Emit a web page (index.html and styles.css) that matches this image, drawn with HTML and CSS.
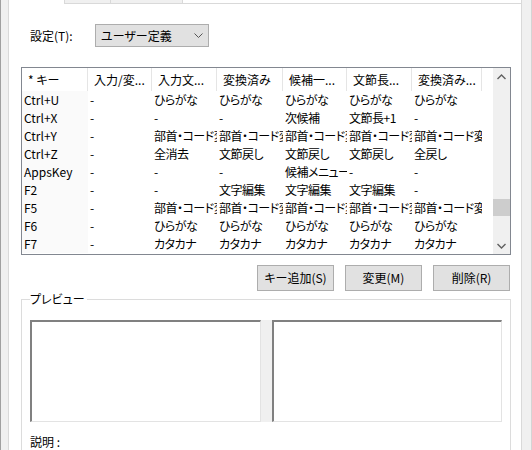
FILE: index.html
```html
<!DOCTYPE html>
<html lang="ja">
<head>
  <meta charset="UTF-8" />
  <title>キー設定</title>
  <link rel="stylesheet" href="styles.css">
</head>
<body>
  <div class="window">
    <div class="tabs">
      <div class="tab tab-active"></div>
      <div class="tab tab-a"></div>
      <div class="tab tab-b"></div>
      <div class="tab tab-fill"></div>
    </div>

    <div class="panel">
      <div class="setting-row">
        <label class="setting-label">設定(T):</label>
        <div class="combo">
          <span>ユーザー定義</span>
          <svg class="combo-arrow" width="9" height="6" viewBox="0 0 9 6"><polyline points="0.5,0.5 4.5,4.5 8.5,0.5" fill="none" stroke="#555" stroke-width="1"/></svg>
        </div>
      </div>

      <div class="listview">
        <div class="list-body">
          <div class="list-head">
            <div class="hcell">* キー</div>
            <div class="hcell">入力/変...</div>
            <div class="hcell">入力文...</div>
            <div class="hcell">変換済み</div>
            <div class="hcell">候補一...</div>
            <div class="hcell">文節長...</div>
            <div class="hcell">変換済み...</div>
          </div>
          <div class="row"><div>Ctrl+U</div><div>-</div><div>ひらがな</div><div>ひらがな</div><div>ひらがな</div><div>ひらがな</div><div>ひらがな</div></div>
          <div class="row"><div>Ctrl+X</div><div>-</div><div>-</div><div>-</div><div>次候補</div><div>文節長+1</div><div>-</div></div>
          <div class="row"><div>Ctrl+Y</div><div>-</div><div>部首・コード変</div><div>部首・コード変</div><div>部首・コード変</div><div>部首・コード変</div><div>部首・コード変</div></div>
          <div class="row"><div>Ctrl+Z</div><div>-</div><div>全消去</div><div>文節戻し</div><div>文節戻し</div><div>文節戻し</div><div>全戻し</div></div>
          <div class="row"><div>AppsKey</div><div>-</div><div>-</div><div>-</div><div>候補メニュー</div><div>-</div><div>-</div></div>
          <div class="row"><div>F2</div><div>-</div><div>-</div><div>文字編集</div><div>文字編集</div><div>文字編集</div><div>-</div></div>
          <div class="row"><div>F5</div><div>-</div><div>部首・コード変</div><div>部首・コード変</div><div>部首・コード変</div><div>部首・コード変</div><div>部首・コード変</div></div>
          <div class="row"><div>F6</div><div>-</div><div>ひらがな</div><div>ひらがな</div><div>ひらがな</div><div>ひらがな</div><div>ひらがな</div></div>
          <div class="row"><div>F7</div><div>-</div><div>カタカナ</div><div>カタカナ</div><div>カタカナ</div><div>カタカナ</div><div>カタカナ</div></div>
        </div>
        <div class="scrollbar">
          <div class="sb-btn">
            <svg width="9" height="6" viewBox="0 0 9 6"><polyline points="0.5,5 4.5,1 8.5,5" fill="none" stroke="#606060" stroke-width="1.4"/></svg>
          </div>
          <div class="sb-track"><div class="sb-thumb"></div></div>
          <div class="sb-btn">
            <svg width="9" height="6" viewBox="0 0 9 6"><polyline points="0.5,1 4.5,5 8.5,1" fill="none" stroke="#606060" stroke-width="1.4"/></svg>
          </div>
        </div>
      </div>

      <div class="buttons">
        <button class="btn">キー追加(S)</button>
        <button class="btn">変更(M)</button>
        <button class="btn">削除(R)</button>
      </div>

      <fieldset class="group">
        <legend>プレビュー</legend>
        <div class="preview-row">
          <div class="preview preview-left"></div>
          <div class="splitter"></div>
          <div class="preview preview-right"></div>
        </div>
        <div class="desc">説明 :</div>
      </fieldset>
    </div>
  </div>
</body>
</html>
```

FILE: styles.css
```css
body { margin: 0; width: 532px; height: 450px; overflow: hidden; background: #f0f0f0; color: #000; font-family: "Noto Sans CJK JP", "Noto Sans", sans-serif; font-size: 12px; font-feature-settings: "palt"; }
.window { height: 450px; border-left: 1px solid #a0a0a0; border-right: 1px solid #d4d4d4; box-sizing: border-box; }

.tabs { display: flex; height: 4px; margin-left: 7px; width: 514px; box-sizing: border-box; }
.tab { box-sizing: border-box; border-right: 1px solid #d9d9d9; border-bottom: 1px solid #d9d9d9; background: #f0f0f0; }
.tab-active { width: 57px; background: #fff; border-left: 1px solid #d9d9d9; border-bottom: none; }
.tab-a { width: 46px; }
.tab-b { width: 72px; }
.tab-fill { flex: 1; background: #fff; border-bottom: 1px solid #d9d9d9; border-right: 1px solid #d9d9d9; }

.panel { margin-left: 7px; width: 514px; height: 460px; box-sizing: border-box; background: #fff; border: 1px solid #d9d9d9; border-top: none; padding: 20px 10px 0 12px; }

.setting-row { display: flex; align-items: center; height: 23px; }
.setting-label { width: 65px; padding-left: 9px; line-height: 14px; }
.combo { width: 114px; height: 23px; box-sizing: border-box; border: 1px solid #adadad; background: #e1e1e1; display: flex; align-items: center; justify-content: space-between; padding: 0 5px 0 5px; line-height: 14px; }
.combo-arrow { margin-top: 1px; }

.listview { margin-top: 20px; height: 188px; width: 490px; box-sizing: border-box; border: 1px solid #828790; display: flex; background: #fff; }
.list-body { flex: 1; overflow: hidden; }
.list-head, .row { display: grid; grid-template-columns: 66px 64px 65px 66px 64px 65px 70px; }
.list-head { height: 23px; }
.hcell { border-right: 1px solid #e5e5e5; padding-left: 6px; line-height: 23px; white-space: nowrap; overflow: hidden; }
.row { height: 18px; }
.row div { padding-left: 2px; line-height: 18px; white-space: nowrap; overflow: hidden; letter-spacing: -0.5px; }
.row div:first-child { background: #fafafa; letter-spacing: 0; }

.scrollbar { width: 17px; background: #f0f0f0; display: flex; flex-direction: column; }
.sb-btn { height: 17px; display: flex; align-items: center; justify-content: center; }
.sb-track { flex: 1; }
.sb-thumb { margin-top: 114px; height: 17px; background: #cdcdcd; }

.buttons { display: flex; justify-content: flex-end; gap: 11px; margin-top: 10px; padding-right: 1px; }
.btn { width: 77px; height: 26px; border: 1px solid #adadad; background: #e1e1e1; font: inherit; color: #000; padding: 0; line-height: 14px; }

.group { margin: 1px 0 0 0; padding: 0 8px 0 8px; border: 1px solid #dcdcdc; border-bottom: none; height: 200px; width: 490px; box-sizing: border-box; }
.group legend { padding: 0 2px 0 0; margin-left: 0; line-height: 14px; }
.preview-row { display: flex; margin-top: 14px; height: 102px; }
.preview { box-sizing: border-box; background: #fff; border-top: 2px solid #808080; border-left: 2px solid #808080; border-right: 1px solid #e3e3e3; border-bottom: 1px solid #e3e3e3; }
.preview-left { width: 231px; }
.splitter { width: 11px; background: #f0f0f0; }
.preview-right { width: 230px; }
.desc { margin-top: 12px; line-height: 16px; }
```
